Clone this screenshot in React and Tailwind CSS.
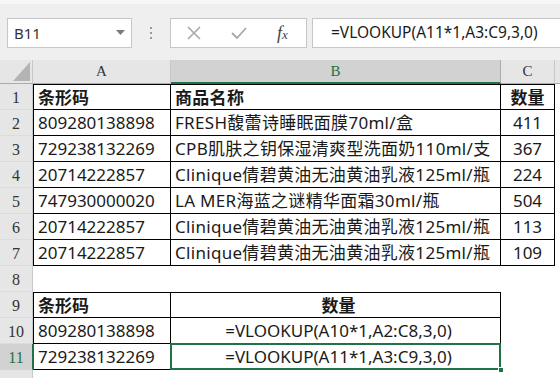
import React from 'react';

const cellFont = { fontFamily: '"Noto Sans", "Noto Sans CJK SC", sans-serif' };
const headFont = { fontFamily: '"Liberation Serif", "DejaVu Serif", serif' };

const rows = [
  { n: 1, a: '条形码', b: '商品名称', c: '数量', bold: true, t1: true, top: true },
  { n: 2, a: '809280138898', b: 'FRESH馥蕾诗睡眠面膜70ml/盒', c: '411', t1: true },
  { n: 3, a: '729238132269', b: 'CPB肌肤之钥保湿清爽型洗面奶110ml/支', c: '367', t1: true },
  { n: 4, a: '20714222857', b: 'Clinique倩碧黄油无油黄油乳液125ml/瓶', c: '224', t1: true },
  { n: 5, a: '747930000020', b: 'LA MER海蓝之谜精华面霜30ml/瓶', c: '504', t1: true },
  { n: 6, a: '20714222857', b: 'Clinique倩碧黄油无油黄油乳液125ml/瓶', c: '113', t1: true },
  { n: 7, a: '20714222857', b: 'Clinique倩碧黄油无油黄油乳液125ml/瓶', c: '109', t1: true },
  { n: 8 },
  { n: 9, a: '条形码', b: '数量', bold: true, t2: true, top: true, center: true },
  { n: 10, a: '809280138898', b: '=VLOOKUP(A10*1,A2:C8,3,0)', t2: true, center: true },
  { n: 11, a: '729238132269', b: '=VLOOKUP(A11*1,A3:C9,3,0)', t2: true, center: true, sel: true },
  { n: 12, hideNum: true },
];

function RowHead({ n, sel, hideNum }) {
  return (
    <div
      style={headFont}
      className={
        sel
          ? 'h-[26px] flex items-center justify-center pt-[2px] text-[16px] bg-[#d2d2d2] text-[#217346] border-r border-r-[#217346] border-b border-b-[#d4d4d4]'
          : 'h-[26px] flex items-center justify-center pt-[2px] text-[16px] bg-[#e6e6e6] text-[#333] border-r border-r-[#c8c8c8] border-b border-b-[#dcdcdc]'
      }
    >
      {hideNum ? '' : n}
    </div>
  );
}

function SheetRow({ r }) {
  const inTable = r.t1 || r.t2;
  const weight = r.bold ? 'font-bold' : 'font-normal';
  const top = r.top ? 'border-t border-t-black' : '';
  return (
    <>
      <RowHead n={r.n} sel={r.sel} hideNum={r.hideNum} />
      <div
        style={cellFont}
        className={`h-[26px] flex items-center pl-[4px] pt-[1px] text-[17px] text-[#1a1a1a] whitespace-nowrap overflow-hidden ${weight} ${
          inTable ? `border-b border-r border-black border-l ${top}` : ''
        } ${r.sel ? 'border-l-[#217346]' : ''}`}
      >
        {r.a}
      </div>
      <div
        style={cellFont}
        className={`relative h-[26px] flex items-center pt-[1px] text-[17px] text-[#1a1a1a] whitespace-nowrap ${weight} ${
          r.center ? 'justify-center pl-[6px]' : 'pl-[4px] tracking-[0.3px]'
        } ${inTable ? `border-b border-r border-black ${top}` : ''}`}
      >
        {r.b}
        {r.sel && (
          <>
            <div className="absolute -left-[1px] -top-[1px] -right-[1px] -bottom-[1px] border-2 border-[#217346]" />
            <div className="absolute -right-[4px] -bottom-[4px] w-[6px] h-[6px] bg-[#217346] border border-white" />
          </>
        )}
      </div>
      <div
        style={cellFont}
        className={`h-[26px] flex items-center justify-center pt-[1px] text-[17px] text-[#1a1a1a] ${weight} ${
          r.t1 ? `border-b border-r border-black ${top}` : ''
        }`}
      >
        {r.c}
      </div>
      <div className="h-[26px]" />
    </>
  );
}

export default function App() {
  return (
    <div className="w-[560px] h-[378px] overflow-hidden bg-white">
      {/* formula bar */}
      <div className="h-[60px] bg-[#efefef] border-t-[4px] border-t-[#f7f7f7] flex items-start pt-[14px]">
        <div className="ml-[7px] w-[125px] h-[30px] bg-white border border-[#c6c6c6] flex items-center justify-between pl-[6px] pr-[6px]">
          <span style={cellFont} className="text-[15px] text-[#333]">B11</span>
          <svg width="9" height="6" viewBox="0 0 9 6">
            <polygon points="0,0 9,0 4.5,5" fill="#7a7a7a" />
          </svg>
        </div>
        <div className="w-[38px] h-[30px] flex flex-col items-center justify-center gap-[3px]">
          <span className="w-[2px] h-[2px] bg-[#9a9a9a]" />
          <span className="w-[2px] h-[2px] bg-[#9a9a9a]" />
          <span className="w-[2px] h-[2px] bg-[#9a9a9a]" />
        </div>
        <div className="w-[137px] h-[30px] bg-white border border-[#c6c6c6] flex items-center">
          <svg className="ml-[16px]" width="14" height="14" viewBox="0 0 14 14">
            <path d="M1 1 L13 13 M13 1 L1 13" stroke="#a8a8a8" strokeWidth="1.6" fill="none" />
          </svg>
          <svg className="ml-[30px]" width="16" height="12" viewBox="0 0 16 12">
            <path d="M1 6 L6 11 L15 1" stroke="#a8a8a8" strokeWidth="1.8" fill="none" />
          </svg>
          <span style={headFont} className="ml-[30px] text-[18px] italic text-[#444]">
            f<span className="text-[13px]">x</span>
          </span>
        </div>
        <div className="ml-[5px] flex-1 h-[30px] bg-white border border-[#c6c6c6] border-r-0 flex items-center pl-[18px]">
          <span style={cellFont} className="text-[15.5px] text-[#1a1a1a]">=VLOOKUP(A11*1,A3:C9,3,0)</span>
        </div>
      </div>

      {/* sheet */}
      <div className="grid grid-cols-[33px_138px_330px_54px_1fr]">
        <div className="h-[24px] bg-[#e6e6e6] border-r border-r-[#c8c8c8] border-b border-b-[#ababab] flex items-end justify-end pr-[2px] pb-[2px]">
          <svg width="17" height="19" viewBox="0 0 17 19">
            <polygon points="17,0 17,19 0,19" fill="#b4b4b4" />
          </svg>
        </div>
        <div style={headFont} className="h-[24px] bg-[#e6e6e6] text-[#333] text-[15px] flex items-center justify-center border-r border-r-[#c8c8c8] border-b border-b-[#ababab]">
          A
        </div>
        <div style={headFont} className="h-[24px] bg-[#d2d2d2] text-[#217346] text-[15px] flex items-center justify-center border-r border-r-[#ababab] border-b-2 border-b-[#217346]">
          B
        </div>
        <div style={headFont} className="h-[24px] bg-[#e6e6e6] text-[#333] text-[15px] flex items-center justify-center border-r border-r-[#c8c8c8] border-b border-b-[#ababab]">
          C
        </div>
        <div className="h-[24px] bg-[#e6e6e6] border-b border-b-[#ababab]" />
        {rows.map((r) => (
          <SheetRow key={r.n} r={r} />
        ))}
      </div>
    </div>
  );
}
